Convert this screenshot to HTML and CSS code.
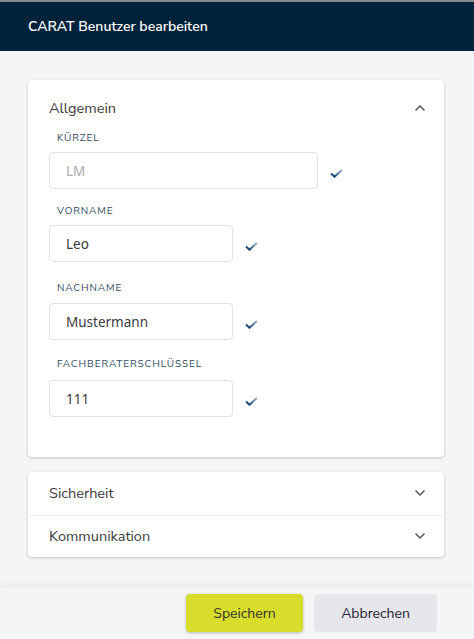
FILE: index.html
```html
<!DOCTYPE html>
<html lang="de">
<head>
<meta charset="utf-8">
<title>CARAT Benutzer bearbeiten</title>
<link rel="stylesheet" href="styles.css">
</head>
<body>
<div class="dialog">
  <header class="dialog-header">CARAT Benutzer bearbeiten</header>
  <main class="dialog-body">
    <section class="card">
      <div class="panel-head">
        <span class="panel-title">Allgemein</span>
        <svg class="chev" viewBox="0 0 12 8" width="12" height="8"><path d="M1.5 6.5 L6 2 L10.5 6.5" fill="none" stroke="#555" stroke-width="1.5"/></svg>
      </div>
      <div class="fields">
        <div class="field field-1">
          <label class="field-label">Kürzel</label>
          <div class="field-row">
            <div class="input input-wide disabled">LM</div>
            <svg class="check" viewBox="0 0 13 9" width="13" height="9"><defs><linearGradient id="g1" x1="0" x2="1" y1="0" y2="0"><stop offset="0.35" stop-color="#1d4a72"/><stop offset="1" stop-color="#9fbad3"/></linearGradient></defs><path d="M1 4.5 L4.5 7.8 L12 1" fill="none" stroke="url(#g1)" stroke-width="2"/></svg>
          </div>
        </div>
        <div class="field field-2">
          <label class="field-label">Vorname</label>
          <div class="field-row">
            <div class="input">Leo</div>
            <svg class="check" viewBox="0 0 13 9" width="13" height="9"><path d="M1 4.5 L4.5 7.8 L12 1" fill="none" stroke="url(#g1)" stroke-width="2"/></svg>
          </div>
        </div>
        <div class="field field-3">
          <label class="field-label">Nachname</label>
          <div class="field-row">
            <div class="input">Mustermann</div>
            <svg class="check" viewBox="0 0 13 9" width="13" height="9"><path d="M1 4.5 L4.5 7.8 L12 1" fill="none" stroke="url(#g1)" stroke-width="2"/></svg>
          </div>
        </div>
        <div class="field field-4">
          <label class="field-label">Fachberaterschlüssel</label>
          <div class="field-row">
            <div class="input">111</div>
            <svg class="check" viewBox="0 0 13 9" width="13" height="9"><path d="M1 4.5 L4.5 7.8 L12 1" fill="none" stroke="url(#g1)" stroke-width="2"/></svg>
          </div>
        </div>
      </div>
    </section>
    <section class="card card-list">
      <div class="list-row">
        <span class="panel-title">Sicherheit</span>
        <svg class="chev" viewBox="0 0 12 8" width="12" height="8"><path d="M1.5 1.5 L6 6 L10.5 1.5" fill="none" stroke="#555" stroke-width="1.5"/></svg>
      </div>
      <div class="list-row">
        <span class="panel-title">Kommunikation</span>
        <svg class="chev" viewBox="0 0 12 8" width="12" height="8"><path d="M1.5 1.5 L6 6 L10.5 1.5" fill="none" stroke="#555" stroke-width="1.5"/></svg>
      </div>
    </section>
  </main>
  <footer class="dialog-footer">
    <button class="btn btn-primary">Speichern</button>
    <button class="btn btn-secondary">Abbrechen</button>
  </footer>
</div>
</body>
</html>
```
FILE: styles.css
```css
* { box-sizing: border-box; }
html, body { margin: 0; padding: 0; }
body {
  width: 474px;
  height: 639px;
  overflow: hidden;
  font-family: "Nunito Sans", Lato, "Open Sans", sans-serif;
  background: #f4f5f7;
  color: #333;
}
.dialog {
  display: flex;
  flex-direction: column;
  height: 639px;
  border-top: 2px solid #8a8a8a;
}
.dialog-header {
  height: 49px;
  background: #00223b;
  color: #fff;
  font-size: 14px;
  font-weight: 600;
  padding-left: 28px;
  display: flex;
  align-items: center;
  flex-shrink: 0;
}
.dialog-body {
  flex: 1;
  padding: 29px 30px 0 28px;
  display: flex;
  flex-direction: column;
  gap: 15px;
}
.card {
  background: #fff;
  border-radius: 4px;
  box-shadow: 0 1px 3px rgba(0,0,0,0.22);
}
.card:first-child {
  padding: 17px 21px 40px 21px;
}
.panel-head {
  display: flex;
  align-items: center;
  justify-content: space-between;
  height: 22px;
}
.panel-title {
  font-size: 14.5px;
  color: #3a3a3a;
}
.chev { margin-right: -3px; }
.fields {
  margin-top: 12px;
  display: flex;
  flex-direction: column;
}
.field-2 { margin-top: 15px; }
.field-3 { margin-top: 19px; }
.field-4 { margin-top: 17px; }
.field-label {
  display: block;
  font-size: 10px;
  line-height: 14px;
  letter-spacing: 0.9px;
  text-transform: uppercase;
  color: #2f4862;
  padding-left: 8px;
  margin-bottom: 7px;
}
.field-3 .field-label { margin-bottom: 8px; }
.field-4 .field-label { margin-bottom: 9px; }
.field-row {
  display: flex;
  align-items: center;
  gap: 12px;
}
.input {
  width: 184px;
  height: 37px;
  border: 1px solid #e2e2e2;
  border-radius: 4px;
  padding-left: 16px;
  display: flex;
  align-items: center;
  font-family: "Noto Sans", "Open Sans", sans-serif;
  font-size: 13.5px;
  color: #3a3a3a;
}
.input-wide { width: 269px; }
.input.disabled { color: #aaa; }
.check { margin-top: 6px; }
.card-list {
  display: flex;
  flex-direction: column;
}
.list-row {
  height: 42.5px;
  display: flex;
  align-items: center;
  justify-content: space-between;
  padding: 0 21px;
}
.list-row + .list-row { border-top: 1px solid #f0f0f0; }
.dialog-footer {
  height: 53px;
  flex-shrink: 0;
  background: #f4f5f7;
  box-shadow: 0 -2px 4px rgba(0,0,0,0.04);
  border-top: 1px solid #ececee;
  display: flex;
  justify-content: flex-end;
  align-items: flex-start;
  padding: 7px 37px 0 0;
  gap: 11px;
}
.btn {
  height: 38px;
  border: none;
  border-radius: 4px;
  font-family: "Nunito Sans", Lato, "Open Sans", sans-serif;
  font-size: 14px;
  color: #333;
}
.btn-primary {
  width: 117px;
  background: #d8dc2a;
  box-shadow: 0 1px 3px rgba(0,0,0,0.25);
}
.btn-secondary {
  width: 123px;
  background: #e6e7ea;
  color: #223;
}
```
